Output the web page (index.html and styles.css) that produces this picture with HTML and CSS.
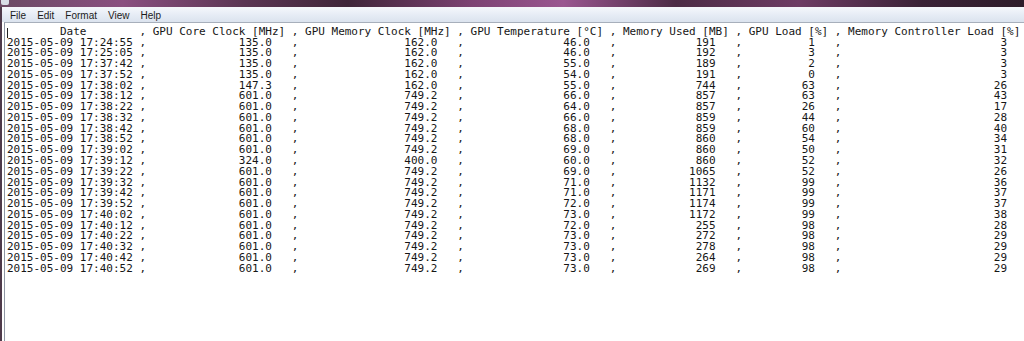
FILE: index.html
```html
<!DOCTYPE html>
<html lang="en">
<head>
  <meta charset="UTF-8" />
  <title>gpu-log.txt - Notepad</title>
  <link rel="stylesheet" href="styles.css">
</head>
<body>
  <div class="window">
    <div class="titlebar"><span class="app-icon"></span></div>
    <div class="frame">
      <nav class="menubar">
        <span class="menu-item">File</span>
        <span class="menu-item">Edit</span>
        <span class="menu-item">Format</span>
        <span class="menu-item">View</span>
        <span class="menu-item">Help</span>
      </nav>
      <div class="editor">
        <span class="caret"></span>
        <pre id="log"></pre>
      </div>
    </div>
  </div>

  <script>
    const cabecera = "        Date        , GPU Core Clock [MHz] , GPU Memory Clock [MHz] , GPU Temperature [\u00B0C] , Memory Used [MB] , GPU Load [%] , Memory Controller Load [%]";

    // fecha, core, memoria, temperatura, memoria usada, carga gpu, carga controlador
    const filas = [
      ["2015-05-09 17:24:55", "135.0", "162.0", "46.0", "191", "1", "3"],
      ["2015-05-09 17:25:05", "135.0", "162.0", "46.0", "192", "3", "3"],
      ["2015-05-09 17:37:42", "135.0", "162.0", "55.0", "189", "2", "3"],
      ["2015-05-09 17:37:52", "135.0", "162.0", "54.0", "191", "0", "3"],
      ["2015-05-09 17:38:02", "147.3", "162.0", "55.0", "744", "63", "26"],
      ["2015-05-09 17:38:12", "601.0", "749.2", "66.0", "857", "63", "43"],
      ["2015-05-09 17:38:22", "601.0", "749.2", "64.0", "857", "26", "17"],
      ["2015-05-09 17:38:32", "601.0", "749.2", "66.0", "859", "44", "28"],
      ["2015-05-09 17:38:42", "601.0", "749.2", "68.0", "859", "60", "40"],
      ["2015-05-09 17:38:52", "601.0", "749.2", "68.0", "860", "54", "34"],
      ["2015-05-09 17:39:02", "601.0", "749.2", "69.0", "860", "50", "31"],
      ["2015-05-09 17:39:12", "324.0", "400.0", "60.0", "860", "52", "32"],
      ["2015-05-09 17:39:22", "601.0", "749.2", "69.0", "1065", "52", "26"],
      ["2015-05-09 17:39:32", "601.0", "749.2", "71.0", "1132", "99", "36"],
      ["2015-05-09 17:39:42", "601.0", "749.2", "71.0", "1171", "99", "37"],
      ["2015-05-09 17:39:52", "601.0", "749.2", "72.0", "1174", "99", "37"],
      ["2015-05-09 17:40:02", "601.0", "749.2", "73.0", "1172", "99", "38"],
      ["2015-05-09 17:40:12", "601.0", "749.2", "72.0", "255", "98", "28"],
      ["2015-05-09 17:40:22", "601.0", "749.2", "73.0", "272", "98", "29"],
      ["2015-05-09 17:40:32", "601.0", "749.2", "73.0", "278", "98", "29"],
      ["2015-05-09 17:40:42", "601.0", "749.2", "73.0", "264", "98", "29"],
      ["2015-05-09 17:40:52", "601.0", "749.2", "73.0", "269", "98", "29"]
    ];

    // ancho de cada columna numerica (alineada a la derecha)
    const anchos = [19, 21, 19, 15, 11, 25];

    const lineas = filas.map(f => {
      const valores = f.slice(1).map((v, i) => v.padStart(anchos[i]) + (i < 5 ? "   ," : ""));
      return f[0] + " ," + valores.join("");
    });

    document.getElementById("log").textContent = [cabecera].concat(lineas).join("\n");
  </script>
</body>
</html>
```

FILE: styles.css
```css
html, body {
  margin: 0;
  height: 100%;
  background: #fff;
}
.window {
  height: 341px;
  overflow: hidden;
  display: flex;
  flex-direction: column;
}
.titlebar {
  height: 7px;
  flex: none;
  position: relative;
  background: linear-gradient(90deg, #6b4a64 0%, #8a4f80 12%, #5a3552 24%, #3f2539 34%, #7c4272 46%, #9a5690 55%, #4c2b45 66%, #6e3c64 78%, #3a2236 90%, #2e1c2a 100%);
}
.app-icon {
  position: absolute;
  left: 1px;
  top: 0;
  width: 8px;
  height: 5px;
  background: #d8dde6;
  border-radius: 0 0 2px 2px;
}
.frame {
  flex: 1;
  display: flex;
  flex-direction: column;
  border-left: 2px solid #4e3a4a;
}
.menubar {
  height: 14px;
  flex: none;
  display: flex;
  align-items: center;
  padding-left: 2.5px;
  border-top: 1px solid #f4f6fa;
  background: linear-gradient(180deg, #f3f6fb 0%, #e6ecf5 50%, #dbe3ee 100%);
  font-family: "Liberation Sans", Arial, sans-serif;
  font-size: 10px;
  color: #1b1b1b;
}
.menu-item {
  padding: 0 5.5px;
}
.editor {
  flex: 1;
  position: relative;
  margin-left: 2px;
  padding: 3.8px 0 0 2px;
  border-top: 1px solid #a7afbb;
  border-left: 1px solid #8f97a4;
  background: #fff;
}
.caret {
  position: absolute;
  left: 2px;
  top: 5px;
  width: 1px;
  height: 10px;
  background: #222;
}
pre {
  margin: 0;
  font-family: "DejaVu Sans Mono", "Liberation Mono", monospace;
  font-size: 11px;
  line-height: 10.77px;
  color: #161616;
}
```
